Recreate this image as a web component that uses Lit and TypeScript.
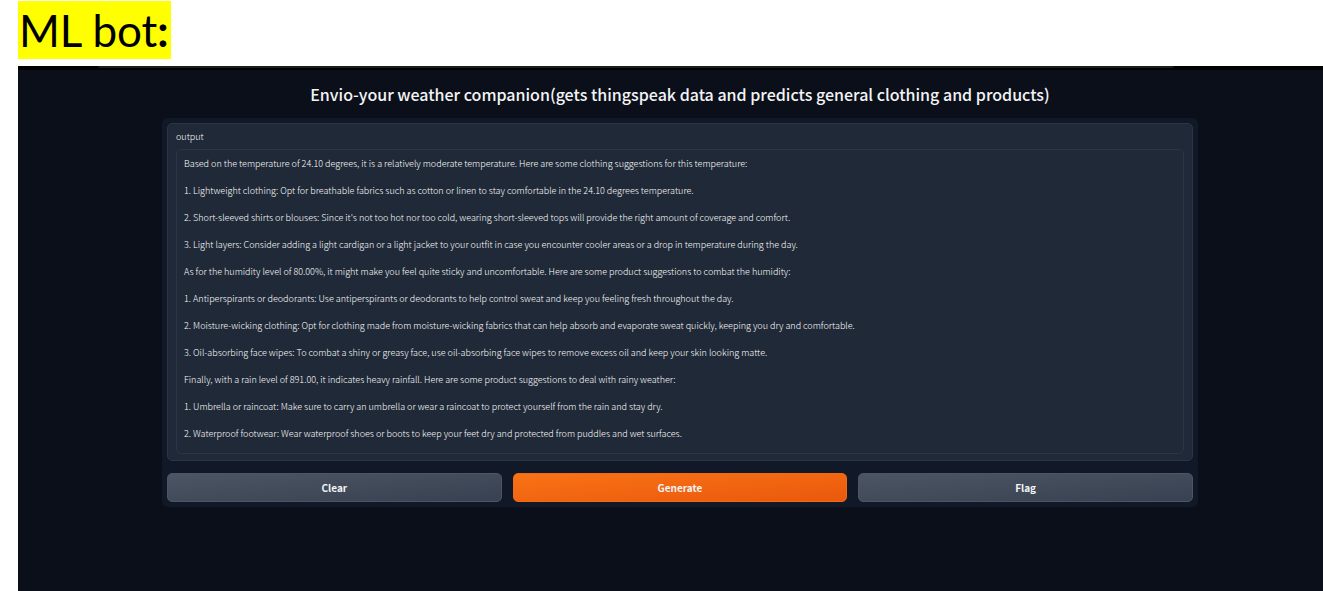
import { LitElement, html, css } from "lit";
import { customElement, state } from "lit/decorators.js";

const SUGGESTIONS = [
  "Based on the temperature of 24.10 degrees, it is a relatively moderate temperature. Here are some clothing suggestions for this temperature:",
  "1. Lightweight clothing: Opt for breathable fabrics such as cotton or linen to stay comfortable in the 24.10 degrees temperature.",
  "2. Short-sleeved shirts or blouses: Since it's not too hot nor too cold, wearing short-sleeved tops will provide the right amount of coverage and comfort.",
  "3. Light layers: Consider adding a light cardigan or a light jacket to your outfit in case you encounter cooler areas or a drop in temperature during the day.",
  "As for the humidity level of 80.00%, it might make you feel quite sticky and uncomfortable. Here are some product suggestions to combat the humidity:",
  "1. Antiperspirants or deodorants: Use antiperspirants or deodorants to help control sweat and keep you feeling fresh throughout the day.",
  "2. Moisture-wicking clothing: Opt for clothing made from moisture-wicking fabrics that can help absorb and evaporate sweat quickly, keeping you dry and comfortable.",
  "3. Oil-absorbing face wipes: To combat a shiny or greasy face, use oil-absorbing face wipes to remove excess oil and keep your skin looking matte.",
  "Finally, with a rain level of 891.00, it indicates heavy rainfall. Here are some product suggestions to deal with rainy weather:",
  "1. Umbrella or raincoat: Make sure to carry an umbrella or wear a raincoat to protect yourself from the rain and stay dry.",
  "2. Waterproof footwear: Wear waterproof shoes or boots to keep your feet dry and protected from puddles and wet surfaces.",
];

@customElement("app-root")
export class AppRoot extends LitElement {
  @state() private output = SUGGESTIONS.join("\n");

  static styles = css`
    :host {
      display: flex;
      flex-direction: column;
      min-height: 100vh;
      box-sizing: border-box;
      padding-left: 18px;
      background: #fff;
      font-family: "Noto Sans CJK SC", "Open Sans", sans-serif;
    }
    .title {
      align-self: flex-start;
      margin: 1px 0 7px;
      padding: 0 2px 0 1px;
      background: #ff0;
      color: #000;
      font-family: Lato, sans-serif;
      font-size: 44px;
      font-weight: 400;
      line-height: 58px;
    }
    .title b {
      font-weight: 700;
    }
    .app {
      flex: 1;
      background: #0b0f19;
      color: #f3f4f6;
    }
    .edge {
      height: 4px;
      padding: 0 149px 0 80px;
      background: #000;
    }
    .edge-line {
      height: 2px;
      background: #1c1c1c;
      border-radius: 0 0 2px 2px;
    }
    .content {
      padding: 12px 125px 0 144px;
    }
    .heading {
      margin: 0 0 12px;
      font-size: 16px;
      font-weight: 500;
      line-height: 24px;
      text-align: center;
    }
    .panel {
      display: flex;
      flex-direction: column;
      gap: 12px;
      padding: 5px;
      border-radius: 6px;
      background: #111827;
    }
    .block {
      display: flex;
      flex-direction: column;
      gap: 4px;
      padding: 5px 8px 6px;
      border: 1px solid #2b3543;
      border-radius: 5px;
      background: #1f2937;
    }
    .label {
      font-size: 9px;
      font-weight: 300;
      line-height: 16px;
      color: #fff;
    }
    .output {
      display: block;
      box-sizing: border-box;
      width: 100%;
      margin: 0;
      padding: 0 7px 6px;
      border: 1px solid #2b3543;
      border-radius: 5px;
      outline: none;
      resize: none;
      overflow: hidden;
      background: #1f2937;
      color: #fff;
      font-family: inherit;
      font-size: 9px;
      font-weight: 300;
      line-height: 27px;
    }
    .actions {
      display: grid;
      grid-template-columns: repeat(3, 1fr);
      gap: 11px;
    }
    .button {
      height: 29px;
      padding: 0;
      border: 1px solid #4b5563;
      border-radius: 5px;
      background: linear-gradient(to bottom right, #4b5563, #374151);
      color: #f3f4f6;
      font-family: inherit;
      font-size: 10px;
      font-weight: 700;
      line-height: 16px;
    }
    .primary {
      border-color: #f26a12;
      background: linear-gradient(to bottom right, #f97316, #ea580c);
    }
  `;

  private clear() {
    this.output = "";
  }

  private generate() {
    this.output = SUGGESTIONS.join("\n");
  }

  render() {
    return html`
      <h1 class="title">ML bot<b>:</b></h1>
      <main class="app">
        <div class="edge"><div class="edge-line"></div></div>
        <div class="content">
          <h2 class="heading">
            Envio-your weather companion(gets thingspeak data and predicts general clothing and products)
          </h2>
          <section class="panel">
            <div class="block">
              <label class="label" for="output">output</label>
              <textarea
                class="output"
                id="output"
                rows="11"
                readonly
                spellcheck="false"
                .value=${this.output}
              ></textarea>
            </div>
            <div class="actions">
              <button class="button" type="button" @click=${this.clear}>Clear</button>
              <button class="button primary" type="button" @click=${this.generate}>Generate</button>
              <button class="button" type="button">Flag</button>
            </div>
          </section>
        </div>
      </main>
    `;
  }
}
